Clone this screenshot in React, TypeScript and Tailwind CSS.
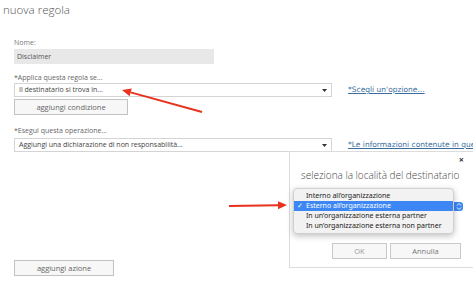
import React from 'react';

const ui = { fontFamily: '"Open Sans", "Noto Sans", sans-serif' };
const mac = { fontFamily: '"Noto Sans", "Liberation Sans", sans-serif' };
const link = { fontFamily: '"DejaVu Sans", Verdana, sans-serif' };

function Caret() {
  return (
    <svg width="5" height="3" viewBox="0 0 5 3" className="shrink-0">
      <path d="M0 0h5L2.5 3z" fill="#333" />
    </svg>
  );
}

function SelectRow({ value, linkText }: { value: string; linkText: string }) {
  return (
    <div className="flex h-[14px] items-center">
      <div className="flex h-[14px] w-[318px] shrink-0 items-center justify-between border border-[#d4d4d4] bg-white pl-[4px] pr-[4px] text-[7px] leading-[10px] text-[#444]">
        <span>{value}</span>
        <Caret />
      </div>
      <a
        href="#"
        style={link}
        className="ml-[16px] whitespace-nowrap text-[7.5px] leading-[10px] text-[#3a6d9e] underline"
      >
        {linkText}
      </a>
    </div>
  );
}

function GrayButton({ label, w }: { label: string; w: string }) {
  return (
    <div className="flex">
      <button
        className={`${w} h-[16px] border border-[#c2c2c2] bg-[#f7f7f7] text-[7.5px] leading-[10px] text-[#666]`}
      >
        {label}
      </button>
    </div>
  );
}

function LocationDialog() {
  const options = [
    'Interno all\u2019organizzazione',
    'Esterno all\u2019organizzazione',
    'In un\u2019organizzazione esterna partner',
    'In un\u2019organizzazione esterna non partner',
  ];
  return (
    <div className="absolute left-[289px] top-[151px] h-[117px] w-[190px] border border-[#dcdcdc] bg-white">
      <div className="flex justify-end pr-[14px] pt-[3px] text-[9px] font-bold leading-[10px] text-[#333]">
        ×
      </div>
      <div className="whitespace-nowrap pl-[11px] pt-[3px] text-[10px] font-light leading-[14px] text-[#444]">
        seleziona la località del destinatario
      </div>
      <div className="mt-[61px] flex gap-[3px] pl-[42px]">
        <button className="h-[16px] w-[55px] border border-[#c8c8c8] bg-[#f7f7f7] text-[7.5px] leading-[10px] text-[#999]">
          OK
        </button>
        <button className="h-[16px] w-[71px] border border-[#c8c8c8] bg-[#f7f7f7] text-[7.5px] leading-[10px] text-[#777]">
          Annulla
        </button>
      </div>

      {/* native select control, open */}
      <div className="absolute left-[3px] top-[50px] h-[9px] w-[170px] rounded-[3px] bg-[#3d87f5]">
        <svg width="6" height="9" viewBox="0 0 6 9" className="absolute right-[1px] top-0">
          <path d="M1 3.5L3 1.5L5 3.5M1 5.5L3 7.5L5 5.5" stroke="white" strokeWidth="0.9" fill="none" />
        </svg>
      </div>
      <div
        style={mac}
        className="absolute left-[3px] top-[36px] w-[161px] rounded-[4px] border border-[#d0d0d0] bg-[#f2f2f2] py-[2px] shadow-[0_2px_6px_rgba(0,0,0,0.25)]"
      >
        {options.map((o, i) => (
          <div
            key={o}
            className={`flex h-[10px] items-center text-[7px] leading-[10px] ${
              i === 1 ? 'bg-[#3d87f5] text-white' : 'text-[#222]'
            }`}
          >
            <span className="w-[12px] pl-[3px] text-[7px]">{i === 1 ? '✓' : ''}</span>
            <span>{o}</span>
          </div>
        ))}
      </div>
    </div>
  );
}

function RedArrow({ x1, y1, x2, y2 }: { x1: number; y1: number; x2: number; y2: number }) {
  const a = Math.atan2(y2 - y1, x2 - x1);
  const L = 9;
  const W = 4;
  const bx = x2 - L * Math.cos(a);
  const by = y2 - L * Math.sin(a);
  const p1 = `${bx + W * Math.sin(a)},${by - W * Math.cos(a)}`;
  const p2 = `${bx - W * Math.sin(a)},${by + W * Math.cos(a)}`;
  return (
    <g>
      <line x1={x1} y1={y1} x2={bx} y2={by} stroke="#e8321e" strokeWidth="2" />
      <polygon points={`${x2},${y2} ${p1} ${p2}`} fill="#e8321e" />
    </g>
  );
}

export default function App() {
  return (
    <div style={ui} className="relative h-[282px] w-[473px] overflow-hidden bg-white">
      <h1 className="pl-[3px] pt-[2px] text-[11.5px] font-light leading-[16px] text-[#555]">
        nuova regola
      </h1>

      <div className="pl-[14px]">
        <div className="mt-[20px] text-[7px] leading-[9px] text-[#777]">Nome:</div>
        <div className="mt-[2px] flex h-[15px] w-[200px] items-center bg-[#e8e8e8] pl-[3px] text-[7px] leading-[10px] text-[#555]">
          Disclaimer
        </div>

        <div className="mt-[9px] text-[7px] leading-[9px] text-[#666]">
          *Applica questa regola se...
        </div>
        <div className="mt-[1px]">
          <SelectRow value="Il destinatario si trova in..." linkText="*Scegli un'opzione..." />
        </div>
        <div className="mt-[2px]">
          <GrayButton label="aggiungi condizione" w="w-[114px]" />
        </div>

        <div className="mt-[11px] text-[7px] leading-[9px] text-[#666]">
          *Esegui questa operazione...
        </div>
        <div className="mt-[3px]">
          <SelectRow
            value="Aggiungi una dichiarazione di non responsabilità..."
            linkText="*Le informazioni contenute in questo messaggio"
          />
        </div>

        <div className="mt-[108px]">
          <GrayButton label="aggiungi azione" w="w-[100px]" />
        </div>
      </div>

      <LocationDialog />

      <svg className="pointer-events-none absolute left-0 top-0" width="473" height="282">
        <RedArrow x1={202} y1={112} x2={122} y2={90} />
        <RedArrow x1={229} y1={206} x2={287} y2={205} />
      </svg>
    </div>
  );
}
